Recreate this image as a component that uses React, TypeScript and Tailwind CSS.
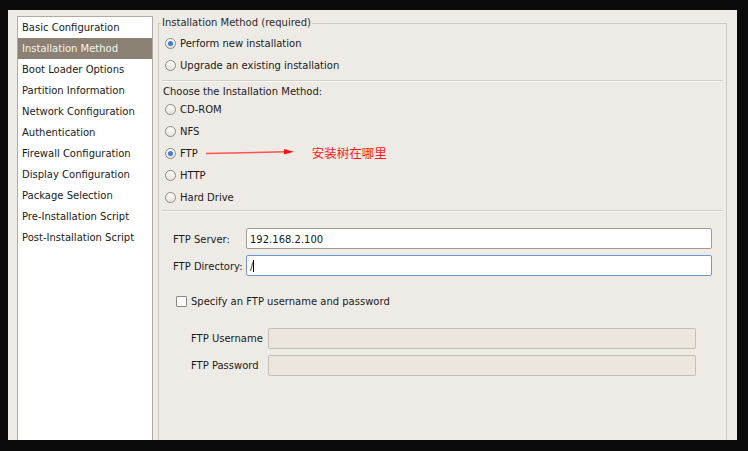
import React from "react";

const items = [
  "Basic Configuration",
  "Installation Method",
  "Boot Loader Options",
  "Partition Information",
  "Network Configuration",
  "Authentication",
  "Firewall Configuration",
  "Display Configuration",
  "Package Selection",
  "Pre-Installation Script",
  "Post-Installation Script",
];

function Radio({ checked }: { checked?: boolean }) {
  return (
    <span className="w-[11px] h-[11px] rounded-full border border-[#8d877f] bg-gradient-to-b from-white to-[#e6e2dc] flex items-center justify-center shrink-0">
      {checked && <span className="w-[5px] h-[5px] rounded-full bg-[#3b7fd4]" />}
    </span>
  );
}

function RadioRow({ label, checked, children }: { label: string; checked?: boolean; children?: React.ReactNode }) {
  return (
    <div className="h-[22px] flex items-center pl-[6px]">
      <Radio checked={checked} />
      <span className="ml-[4px] pt-[2px] text-[#1a1a1a]">{label}</span>
      {children}
    </div>
  );
}

export default function App() {
  return (
    <div className="w-[748px] h-[451px] bg-[#0a0a0a] pt-[10px] pl-[8px] pr-[11px] pb-[11px] overflow-hidden font-['DejaVu_Sans',sans-serif] text-[10px] leading-none">
      <div className="h-full bg-[#eeebe6] flex pt-[6px] pl-[9px] pr-[10px] overflow-hidden">
        {/* Left list */}
        <div className="w-[136px] h-[440px] shrink-0 bg-white border border-[#b3ab9f] flex flex-col">
          {items.map((it, i) => (
            <div
              key={it}
              className={
                i === 1
                  ? "h-[21px] flex items-center pl-[4px] bg-[#8a8174] text-[#f6f3ee]"
                  : "h-[21px] flex items-center pl-[4px] text-[#1a1a1a]"
              }
            >
              {it}
            </div>
          ))}
        </div>

        {/* Right fieldset */}
        <fieldset className="ml-[5px] flex-1 min-w-0 h-[440px] border border-[#cfc9c1]">
          <legend className="ml-[2px] px-[1px] leading-[14px] text-[#2a2a2a]">Installation Method (required)</legend>
          <div className="mt-[2px]">
            <RadioRow label="Perform new installation" checked />
            <RadioRow label="Upgrade an existing installation" />
          </div>
          <div className="mt-[4px] mx-[3px] border-t border-[#d3cdc5] border-b border-b-[#faf8f5]" />
          <div className="h-[16px] flex items-center pl-[4px] pt-[4px] text-[#1a1a1a]">Choose the Installation Method:</div>
          <RadioRow label="CD-ROM" />
          <RadioRow label="NFS" />
          <RadioRow label="FTP" checked>
            <svg width="89" height="8" viewBox="0 0 89 8" className="ml-[8px]">
              <line x1="0" y1="4.5" x2="80" y2="2.8" stroke="#ff5252" strokeWidth="1.4" />
              <polygon points="78,0 88,2.8 78,5.6" fill="#ff1010" />
            </svg>
            <span className="ml-[17px] text-[12.5px] text-[#ff1a1a] font-['Noto_Sans_CJK_SC',sans-serif]">安装树在哪里</span>
          </RadioRow>
          <RadioRow label="HTTP" />
          <RadioRow label="Hard Drive" />
          <div className="mt-[2px] mx-[3px] border-t border-[#d3cdc5] border-b border-b-[#faf8f5]" />

          <div className="mt-[16px] pl-[14px] flex flex-col gap-[6px]">
            <div className="flex items-center">
              <span className="w-[73px] pt-[2px] text-[#1a1a1a]">FTP Server:</span>
              <div className="w-[466px] h-[21px] bg-white border border-[#a39b90] rounded-[2px] flex items-center pl-[3px] pt-[2px] text-[#1a1a1a]">
                192.168.2.100
              </div>
            </div>
            <div className="flex items-center">
              <span className="w-[73px] pt-[2px] text-[#1a1a1a]">FTP Directory:</span>
              <div className="w-[466px] h-[21px] bg-white border border-[#6e97cf] rounded-[2px] flex items-center pl-[3px] text-[#1a1a1a]">
                <span className="pt-[2px]">/</span>
                <span className="w-[1px] h-[12px] bg-black" />
              </div>
            </div>
          </div>

          <div className="mt-[15px] h-[20px] pl-[17px] flex items-center">
            <span className="w-[11px] h-[11px] border border-[#8d877f] bg-white rounded-[1px]" />
            <span className="ml-[4px] pt-[2px] text-[#1a1a1a]">Specify an FTP username and password</span>
          </div>

          <div className="mt-[17px] pl-[32px] flex flex-col gap-[6px]">
            <div className="flex items-center">
              <span className="w-[77px] text-[#1a1a1a]">FTP Username</span>
              <div className="w-[428px] h-[21px] bg-[#ede6dd] border border-[#c6beb3] rounded-[2px]" />
            </div>
            <div className="flex items-center">
              <span className="w-[77px] text-[#1a1a1a]">FTP Password</span>
              <div className="w-[428px] h-[21px] bg-[#ede6dd] border border-[#c6beb3] rounded-[2px]" />
            </div>
          </div>
        </fieldset>
      </div>
    </div>
  );
}
